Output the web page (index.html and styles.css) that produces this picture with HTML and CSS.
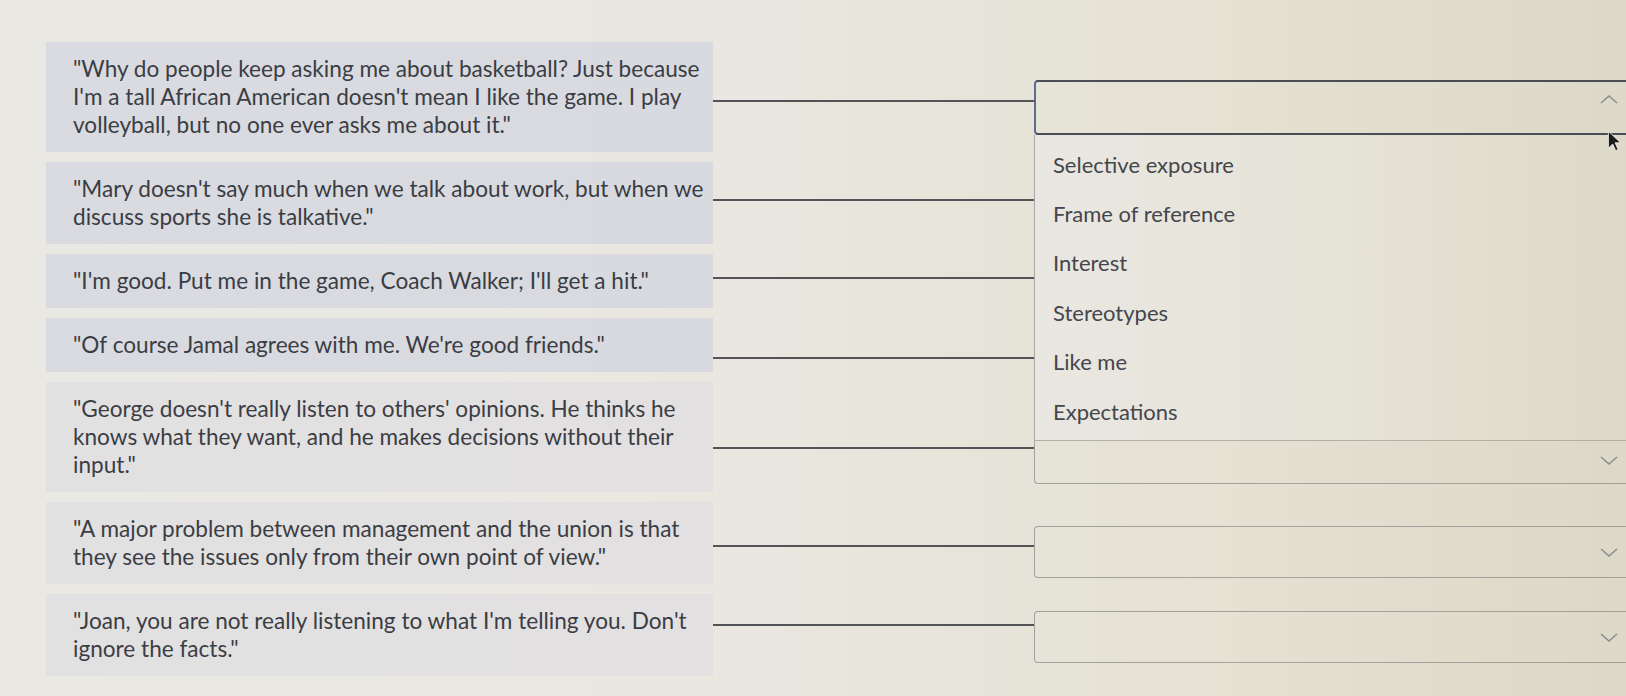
FILE: index.html
```html
<!DOCTYPE html>
<html lang="en">
<head>
<meta charset="utf-8">
<title>Matching</title>
<link rel="stylesheet" href="styles.css">
</head>
<body>
<div class="board">
  <div class="row r1">
    <div class="prompt">"Why do people keep asking me about basketball? Just because I'm a tall African American doesn't mean I like the game. I play volleyball, but no one ever asks me about it."</div>
    <div class="link"></div>
    <div class="select open">
      <svg class="chev" viewBox="0 0 18 10"><path d="M1 9 L9 2 L17 9"/></svg>
      <ul class="menu">
        <li>Selective exposure</li>
        <li>Frame of reference</li>
        <li>Interest</li>
        <li>Stereotypes</li>
        <li>Like me</li>
        <li>Expectations</li>
      </ul>
      <svg class="cursor" viewBox="0 0 12 18"><path d="M1 1 L1 15 L4.5 11.5 L7 17 L9 16 L6.5 10.5 L11 10.5 Z"/></svg>
    </div>
  </div>
  <div class="row r2">
    <div class="prompt">"Mary doesn't say much when we talk about work, but when we discuss sports she is talkative."</div>
    <div class="link"></div>
    <div class="select hidden"></div>
  </div>
  <div class="row r3">
    <div class="prompt">"I'm good. Put me in the game, Coach Walker; I'll get a hit."</div>
    <div class="link"></div>
    <div class="select hidden"></div>
  </div>
  <div class="row r4">
    <div class="prompt">"Of course Jamal agrees with me. We're good friends."</div>
    <div class="link"></div>
    <div class="select hidden"></div>
  </div>
  <div class="row r5">
    <div class="prompt">"George doesn't really listen to others' opinions. He thinks he knows what they want, and he makes decisions without their input."</div>
    <div class="link"></div>
    <div class="select"><svg class="chev" viewBox="0 0 18 10"><path d="M1 1 L9 8 L17 1"/></svg></div>
  </div>
  <div class="row r6">
    <div class="prompt">"A major problem between management and the union is that they see the issues only from their own point of view."</div>
    <div class="link"></div>
    <div class="select"><svg class="chev" viewBox="0 0 18 10"><path d="M1 1 L9 8 L17 1"/></svg></div>
  </div>
  <div class="row r7">
    <div class="prompt">"Joan, you are not really listening to what I'm telling you. Don't ignore the facts."</div>
    <div class="link"></div>
    <div class="select"><svg class="chev" viewBox="0 0 18 10"><path d="M1 1 L9 8 L17 1"/></svg></div>
  </div>
</div>
</body>
</html>
```
FILE: styles.css
```css
html, body {
  margin: 0;
  height: 100%;
}
body {
  overflow: hidden;
  font-family: Lato, "Open Sans", sans-serif;
  background: linear-gradient(90deg, #eae8e3 0%, #e9e7e0 45%, #e5e1d3 75%, #ddd9c8 100%);
  color: #3b3d44;
}
.board {
  width: 1594px;
  padding: 42px 0 0 46px;
  display: flex;
  flex-direction: column;
  gap: 10px;
}
.row {
  display: grid;
  grid-template-columns: 667px 321px 1fr;
  align-items: center;
}
.prompt {
  background: rgba(200, 205, 222, 0.5);
  font-size: 22.6px;
  line-height: 28px;
  padding: 13px 5px 13px 27px;
}
.r5 .prompt, .r6 .prompt, .r7 .prompt {
  background: rgba(214, 216, 226, 0.4);
}
.link {
  height: 2px;
  background: #525458;
}
.r1 .link { margin-top: 8px; }
.r2 .link, .r3 .link { margin-bottom: 6px; }
.r4 .link { margin-top: 26px; }
.r5 .link { margin-top: 22px; }
.r6 .link { margin-top: 6px; }
.r7 .link { margin-bottom: 20px; }
.select {
  position: relative;
  height: 52px;
  border: 1px solid #a2a29c;
  border-right: none;
  border-radius: 4px 0 0 4px;
  box-sizing: border-box;
}
.r5 .select {
  height: 47px;
  margin-top: 46px;
}
.r6 .select { margin-top: 18px; }
.r7 .select { margin-top: 4px; }
.select.hidden {
  visibility: hidden;
}
.select.open {
  height: 55px;
  border: 2px solid #4a4d56;
  border-left-color: #5d6a92;
  border-right: none;
  margin-top: 20px;
}
.chev {
  position: absolute;
  right: 22px;
  top: 50%;
  width: 18px;
  height: 10px;
  margin-top: -4px;
  fill: none;
  stroke: #8a8c8e;
  stroke-width: 1.5;
}
.open .chev {
  margin-top: -13px;
}
.cursor {
  position: absolute;
  right: 18px;
  top: 48px;
  width: 15px;
  height: 22px;
  fill: #1b1b1b;
  stroke: #f4f4f0;
  stroke-width: 0.7;
  z-index: 3;
}
.menu {
  position: absolute;
  left: -2px;
  right: 0;
  top: 100%;
  margin: 2px 0 0;
  padding: 5px 0 4px;
  list-style: none;
  background: linear-gradient(90deg, #e9e7e1 0%, #e6e3d7 50%, #ddd9c8 100%);
  border-left: 1px solid #a8a8a4;
  border-bottom: 1px solid #b0afa8;
  z-index: 2;
}
.menu li {
  font-size: 22px;
  line-height: 49.4px;
  padding-left: 18px;
  color: #44464c;
}
```
